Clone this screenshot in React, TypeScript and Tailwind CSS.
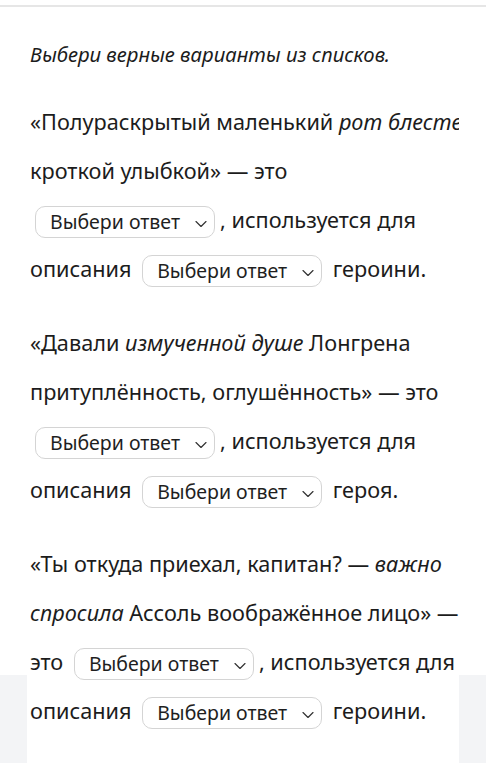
import { ChevronDown } from "lucide-react";

function Pick() {
  return (
    <span className="inline-flex items-center align-middle h-[32px] w-[180px] mx-[5px] pl-[14px] pr-[3px] justify-between rounded-[10px] border border-[#d4d4d4] bg-white text-[19.5px] leading-none text-[#1f1f1f]">
      <span>Выбери ответ</span>
      <ChevronDown size={20} strokeWidth={1.4} className="mt-[3px] text-[#333]" />
    </span>
  );
}

export default function App() {
  return (
    <div
      className="min-h-screen bg-[linear-gradient(to_bottom,#ffffff_675px,#f3f4f6_675px)]"
      style={{ fontFamily: '"Noto Sans", "Open Sans", sans-serif' }}
    >
      <div className="h-[5px] bg-white" />
      <div className="h-[2px] bg-[#e6e6e6]" />
      <div className="mx-auto w-[432px] min-h-[756px] bg-white overflow-hidden pl-[3px] text-[#1c1c1c]">
        <p className="mt-[34px] italic text-[20.3px] leading-[26px]">Выбери верные варианты из списков.</p>

        <p className="mt-[30px] text-[21.7px] leading-[49px]">
          <span className="whitespace-nowrap">
            «Полураскрытый маленький <i>рот блестел</i>
          </span>{" "}
          кроткой улыбкой» — это <Pick />, используется для описания <Pick /> героини.
        </p>

        <p className="mt-[25px] text-[21.7px] leading-[49px]">
          «Давали <i>измученной душе</i> Лонгрена притуплённость, оглушённость» — это <Pick />, используется для описания <Pick /> героя.
        </p>

        <p className="mt-[25px] text-[21.7px] leading-[49px]">
          «Ты откуда приехал, капитан? — <i>важно спросила</i> Ассоль воображённое лицо» — это <Pick />, используется для описания <Pick /> героини.
        </p>
      </div>
    </div>
  );
}
